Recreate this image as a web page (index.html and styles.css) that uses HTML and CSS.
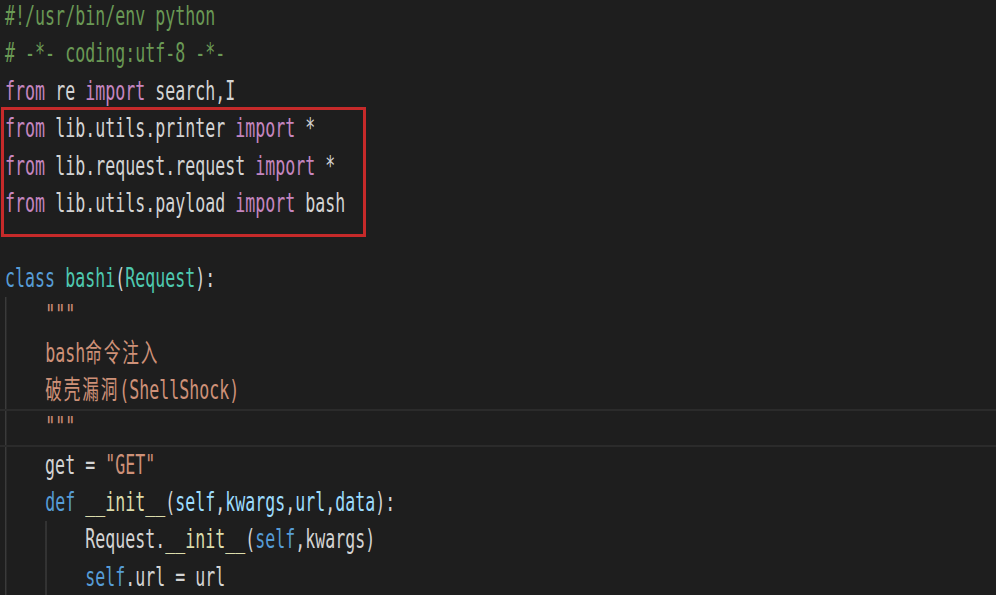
FILE: index.html
```html
<!DOCTYPE html>
<html lang="zh-CN">
<head>
  <meta charset="UTF-8">
  <title>bashi.py</title>
  <link rel="stylesheet" href="styles.css">
</head>
<body>
  <div class="editor">
    <div class="code">
      <div class="ln"><span class="cm">#!/usr/bin/env python</span></div>
      <div class="ln"><span class="cm"># -*- coding:utf-8 -*-</span></div>
      <div class="ln"><span class="kw">from</span> re <span class="kw">import</span> search,I</div>
      <div class="ln"><span class="kw">from</span> lib.utils.printer <span class="kw">import</span> *</div>
      <div class="ln"><span class="kw">from</span> lib.request.request <span class="kw">import</span> *</div>
      <div class="ln"><span class="kw">from</span> lib.utils.payload <span class="kw">import</span> bash</div>
      <div class="ln"> </div>
      <div class="ln"><span class="st">class</span> <span class="ty">bashi</span>(<span class="ty">Request</span>):</div>
      <div class="guide">
        <div class="ln">    <span class="str">"""</span></div>
        <div class="ln">    <span class="str">bash<span class="cjk">命令注入</span></span></div>
        <div class="ln">    <span class="str"><span class="cjk">破壳漏洞</span>(ShellShock)</span></div>
        <div class="ln current">    <span class="str">"""</span></div>
        <div class="ln">    get = <span class="str">"GET"</span></div>
        <div class="ln">    <span class="st">def</span> <span class="fn">__init__</span>(<span class="pm">self</span>,<span class="pm">kwargs</span>,<span class="pm">url</span>,<span class="pm">data</span>):</div>
        <div class="guide inner">
          <div class="ln">        <span class="ty-plain">Request</span>.<span class="fn">__init__</span>(<span class="st">self</span>,kwargs)</div>
          <div class="ln">        <span class="st">self</span>.url = url</div>
        </div>
      </div>
    </div>
    <div class="mark"></div>
  </div>
</body>
</html>
```

FILE: styles.css
```css
/* editor de fondo oscuro */
html, body {
  margin: 0;
  padding: 0;
  background: #1e1e1e;
  overflow: hidden;
}

.editor {
  position: relative;
  width: 996px;
  height: 595px;
  overflow: hidden;
}

.code {
  width: 1560px;
  margin-top: -2px;
  font-family: "DejaVu Sans Mono", "Noto Sans CJK SC", monospace;
  font-size: 26px;
  line-height: 37.4px;
  color: #d4d4d4;
  transform: scaleX(0.639);
  transform-origin: 0 0;
}

.ln {
  white-space: pre;
  padding-left: 8px;
  height: 37.4px;
}

.ln.current {
  box-shadow: inset 0 2px #2b2b2b, inset 0 -2px #2b2b2b;
}

.guide {
  background: linear-gradient(#3e3e3e, #3e3e3e) no-repeat 8px 0 / 2px 100%;
}

.guide.inner {
  background-position: calc(8px + 4ch) 0;
}

.cm { color: #6a9955; }
.kw { color: #c586c0; }
.st { color: #569cd6; }
.ty { color: #4ec9b0; }
.ty-plain { color: #d4d4d4; }
.str { color: #ce9178; }
.fn { color: #dcdcaa; }
.pm { color: #9cdcfe; }

.cjk {
  letter-spacing: 3px;
}

/* marco rojo de anotación */
.mark {
  position: absolute;
  left: 1px;
  top: 107px;
  width: 359px;
  height: 124px;
  border: 3px solid #c62a2a;
}
```
